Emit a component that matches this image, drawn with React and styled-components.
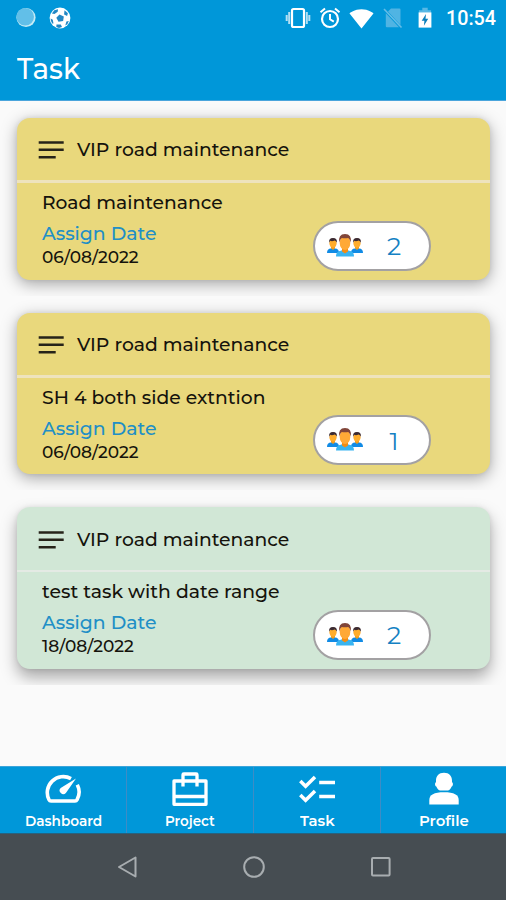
import React, { useLayoutEffect, useRef, useState } from "react";
import styled, { createGlobalStyle } from "styled-components";
import { MdSignalWifi4Bar } from "react-icons/md";

const Global = createGlobalStyle`
  * { box-sizing: border-box; }
  body { margin: 0; background: #fafafa; }
`;

const Screen = styled.div`
  width: 506px;
  height: 900px;
  display: flex;
  flex-direction: column;
  overflow: hidden;
  background: #fafafa;
  font-family: Montserrat, Inter, "Open Sans", sans-serif;
`;

const TopBar = styled.header`
  height: 101px;
  flex: none;
  background: #0097d9;
  border-bottom: 1px solid #4aa5dc;
  color: #fff;
`;

const StatusBar = styled.div`
  height: 36px;
  display: flex;
  align-items: center;
  padding-left: 15px;
  padding-right: 10px;

  svg { display: block; flex: none; }
`;

const StatusGap = styled.span`
  width: ${(p) => p.$w}px;
  flex: ${(p) => (p.$w ? "none" : "1")};
`;

const TitleRow = styled.div`
  height: 64px;
  padding: 2px 0 0 17px;
  display: flex;
  align-items: center;
`;

const TextBox = styled.span`
  display: block;
  flex: none;
  width: ${(p) => p.$w}px;
  height: ${(p) => p.$line}px;
  line-height: ${(p) => p.$line}px;
  font-size: ${(p) => p.$size}px;
  font-weight: ${(p) => p.$weight || 500};
  font-family: ${(p) => p.$family || "inherit"};
  color: ${(p) => p.$color || "inherit"};
  white-space: nowrap;
`;

const TextInner = styled.span`
  display: inline-block;
  transform-origin: 0 50%;
`;

/* Stretches one line of text to a fixed width. */
function FitText({ width, size, line, weight, color, family, children }) {
  const ref = useRef(null);
  const [scale, setScale] = useState(1);
  useLayoutEffect(() => {
    setScale(width / ref.current.offsetWidth);
  }, [width, children]);
  return (
    <TextBox $w={width} $line={line} $size={size} $weight={weight} $color={color} $family={family}>
      <TextInner ref={ref} style={{ transform: `scaleX(${scale})` }}>
        {children}
      </TextInner>
    </TextBox>
  );
}

const List = styled.main`
  flex: 1;
  min-height: 0;
`;

const CardSlot = styled.div`
  height: 194.5px;
  padding: 17.3px 16px 0 17px;
  overflow: hidden;
`;

const Card = styled.article`
  height: 161.5px;
  border-radius: 13px;
  background: ${(p) => p.$fill};
  box-shadow: 0 ${(p) => p.$drop}px 16px rgba(0, 0, 0, 0.34), 0 0 5px rgba(0, 0, 0, 0.08);
  color: #15130c;
`;

const CardHead = styled.div`
  height: 65px;
  display: flex;
  align-items: center;
  gap: 12.5px;
  padding-top: 2px;
  padding-left: 21px;
  border-bottom: ${(p) => p.$rule}px solid ${(p) => p.$ruleColor};
`;

const CardBody = styled.div`
  display: flex;
  padding-left: 25px;
`;

const Details = styled.div`
  width: 270.5px;
  flex: none;
  padding-top: 8px;
  display: flex;
  flex-direction: column;
`;

const CountPill = styled.div`
  width: 118px;
  height: 50px;
  margin-top: 37.5px;
  border: 2.5px solid #a3a1a3;
  border-radius: 25px;
  background: #fff;
  display: flex;
  align-items: center;
  padding-left: 11px;
  gap: 21.5px;
`;

const Count = styled.span`
  width: 18px;
  line-height: 28px;
  padding-top: 1px;
  text-align: center;
  font-size: 25px;
  font-weight: 400;
  color: #1581c3;
`;

const NavBar = styled.nav`
  height: 68px;
  flex: none;
  display: grid;
  grid-template-columns: 127px 127px 127px 1fr;
  background: #0097d9;
  border-top: 1px solid #3ba4da;
  border-bottom: 1px solid #27627f;
`;

const NavItem = styled.div`
  display: flex;
  flex-direction: column;
  align-items: center;
  border-right: ${(p) => (p.$last ? "0" : "1px solid #3d8cc5")};
  color: #fff;
`;

const NavIcon = styled.div`
  height: 44px;
  display: flex;
  align-items: center;
  svg { display: block; }
`;

const SystemBar = styled.footer`
  height: 66px;
  flex: none;
  display: flex;
  justify-content: center;
  align-items: center;
  gap: 104px;
  padding-left: 1px;
  background: #464d52;
  svg { display: block; }
`;

const NotificationDot = () => (
  <svg width="22" height="22" viewBox="0 0 22 22">
    <circle cx="11" cy="10.5" r="9.6" fill="#c4ebf5" />
    <circle cx="10.200" cy="9.700" r="8.800" fill="#62bfe8" />
  </svg>
);

const BallIcon = () => (
  <svg width="24" height="24" viewBox="0 0 24 24">
    <circle cx="12" cy="12" r="10.400" fill="#fff" />
    <g fill="#2187c4">
      <path d="m11.500 8.500 4.300 2-.7 4.500-4.600.8-2.200-4z" />
      <path d="M6.300 4.200 10 3.300l-.3 2.400-3.200 2.200-2.600-.3z" />
      <path d="m16.500 4.300 3.400 3-.8 2.700-3-1.400z" />
      <path d="m2.600 12.500 2.200 1.300.7 3.600-1.300.2q-1.500-2.300-1.600-5.100z" />
      <path d="m8.500 18.400 4.300.1 1.200 2.400-3 1.100-2.700-1z" />
      <path d="m18.400 15.500 2.500-.5-1.600 3.300-2 1.200z" />
    </g>
  </svg>
);

const VibrateIcon = () => (
  <svg width="26" height="24" viewBox="0 0 26 24">
    <rect x="7" y="3" width="12" height="18" rx="1.500" fill="none" stroke="#fff" strokeWidth="2.200" />
    <path d="M4.200 6v12M21.800 6v12M1.700 9v6M24.300 9v6" stroke="#b5dff3" strokeWidth="2" fill="none" />
  </svg>
);

const AlarmIcon = () => (
  <svg width="22" height="24" viewBox="0 0 22 24">
    <circle cx="11" cy="13" r="8" fill="none" stroke="#fff" strokeWidth="2.200" />
    <path d="M11 8v5.300l3.800 2.300M1.500 6.300 6 2.600M20.500 6.300 16 2.600" fill="none" stroke="#fff" strokeWidth="2" />
  </svg>
);

const NoSimIcon = () => (
  <svg width="20" height="22" viewBox="0 0 20 22">
    <path d="M8 1.500h8.500q1 0 1 1V18L5 4.500zM2.800 6.200 16 20.200H3.800q-1 0-1-1z" fill="#50b4e3" />
    <path d="M1 2 18.500 20.500" stroke="#65bde7" strokeWidth="1.600" />
  </svg>
);

const BatteryIcon = () => (
  <svg width="14" height="22" viewBox="0 0 14 22">
    <path d="M4.300 0.800h5.400v2.400h3.400v2.600H.9V3.200h3.400z" fill="#58b8e5" />
    <path d="M.6 5.400h12.800v15.200H.6z" fill="#fff" />
    <path d="M8 7 3.700 13.800h2.700l-.5 5 4.300-7H7.500z" fill="#0b7fbc" />
  </svg>
);

const LinesIcon = () => (
  <svg width="26" height="20" viewBox="0 0 26 20">
    <path d="M.7 2.400h25M.7 9.800h25M.7 17.200h17" stroke="#262319" strokeWidth="2.500" fill="none" />
  </svg>
);

const PersonSmall = () => (
  <>
    <path d="M1 20q0-4.200 4-4.400l2-1 2 1q4 .2 4 4.400z" fill="#118be5" />
    <path d="M5 12h4v3.200L7 17l-2-1.800z" fill="#f49b16" />
    <ellipse cx="7" cy="10.200" rx="3.600" ry="4.600" fill="#ffad2d" />
    <path d="M3.200 9.800q-.8-4.600 3.800-4.700 4.600.1 3.800 4.700Q10 7.700 8.700 7.500 6 8.600 4.200 7.800z" fill="#3b2a32" />
  </>
);

const PeopleIcon = () => (
  <svg width="38" height="26" viewBox="0 0 38 26">
    <PersonSmall />
    <g transform="translate(24 0)"><PersonSmall /></g>
    <path d="M10 23.500q0-5.400 4.800-5.800l4.200-1.600 4.200 1.600q4.800.4 4.800 5.800z" fill="#38b4f1" />
    <path d="M16 14h6v4.400l-3 2.200-3-2.200z" fill="#f28c12" />
    <ellipse cx="19" cy="9.900" rx="5.300" ry="7.200" fill="#ffa936" />
    <path d="M13.300 9.500q-1.400-8.500 5.700-8.600 7.100.1 5.700 8.600-.7-3.600-2.400-4.600-3.300.9-6.600 0-1.700 1-2.400 4.600z" fill="#814539" />
  </svg>
);

const DashboardIcon = () => (
  <svg width="38" height="32" viewBox="0 0 38 32">
    <path
      d="M27 5.600A16 16 0 0 0 5 26.800Q5.600 28 7 28H31Q32.400 28 33 26.800A16 16 0 0 0 33.300 11.700"
      fill="none" stroke="#fff" strokeWidth="3.600"
    />
    <path d="M32 5.500 21.900 19.900a3.600 3.600 0 1 1-5.200-5z" fill="#fff" stroke="#0097d9" strokeWidth="1" paintOrder="stroke" />
  </svg>
);

const ProjectIcon = () => (
  <svg width="38" height="36" viewBox="0 0 38 36">
    <path
      d="M3 10h32v23.300H3zM3 25.500h32M12 15.500V3.800q0-.8.800-.8h12.400q.8 0 .8.800v11.700"
      fill="none" stroke="#fff" strokeWidth="3.300" strokeLinejoin="round"
    />
  </svg>
);

const TaskIcon = () => (
  <svg width="38" height="30" viewBox="0 0 38 30">
    <path d="m2.300 7 5.300 5.300L17 2.900M2.300 21l5.300 5.300L17 16.900M21.200 8.600H37M21.200 22.600H37" fill="none" stroke="#fff" strokeWidth="3.500" />
  </svg>
);

const ProfileIcon = () => (
  <svg width="32" height="34" viewBox="0 0 32 34">
    <path d="M16 .7c5.300 0 8 3.500 8 8v1.500c1.400.4 1.200 3.900-.3 4.300Q21.900 18.500 19.800 18.500h-7.600q-2.100 0-3.900-4c-1.500-.4-1.700-3.900-.3-4.300V8.700c0-4.500 2.700-8 8-8z" fill="#fff" />
    <path d="M1.300 32.500V28C1.300 22.800 6 20.300 16 20.300s14.700 2.500 14.700 7.700v4.500z" fill="#fff" />
  </svg>
);

const TASKS = [
  { fill: "#e9d87c", rule: 3, ruleColor: "#eee3bd", drop: 4, name: "Road maintenance", nameWidth: 181, date: "06/08/2022", dateWidth: 97, count: "2" },
  { fill: "#e9d87c", rule: 3, ruleColor: "#eee3bd", drop: 4, name: "SH 4 both side extntion", nameWidth: 223, date: "06/08/2022", dateWidth: 97, count: "1" },
  { fill: "#d1e7d6", rule: 2, ruleColor: "#e4eae4", drop: 8, name: "test task with date range", nameWidth: 238, date: "18/08/2022", dateWidth: 92, count: "2" },
];

const NAV = [
  { label: "Dashboard", width: 77, Icon: DashboardIcon },
  { label: "Project", width: 50, Icon: ProjectIcon },
  { label: "Task", width: 35, Icon: TaskIcon },
  { label: "Profile", width: 50, Icon: ProfileIcon },
];

function TaskCard({ task }) {
  return (
    <CardSlot>
      <Card $fill={task.fill} $drop={task.drop}>
        <CardHead $rule={task.rule} $ruleColor={task.ruleColor}>
          <LinesIcon />
          <FitText width={212} size={19} line={24}>VIP road maintenance</FitText>
        </CardHead>
        <CardBody>
          <Details>
            <FitText width={task.nameWidth} size={19} line={24}>{task.name}</FitText>
            <FitText width={115} size={19} line={37} color="#218fc6">Assign Date</FitText>
            <FitText width={task.dateWidth} size={17} line={11}>{task.date}</FitText>
          </Details>
          <CountPill>
            <PeopleIcon />
            <Count>{task.count}</Count>
          </CountPill>
        </CardBody>
      </Card>
    </CardSlot>
  );
}

export default function App() {
  return (
    <Screen>
      <Global />
      <TopBar>
        <StatusBar>
          <NotificationDot />
          <StatusGap $w={11} />
          <BallIcon />
          <StatusGap />
          <VibrateIcon />
          <StatusGap $w={8} />
          <AlarmIcon />
          <StatusGap $w={8} />
          <MdSignalWifi4Bar size={25} />
          <StatusGap $w={9} />
          <NoSimIcon />
          <StatusGap $w={15} />
          <BatteryIcon />
          <StatusGap $w={14} />
          <FitText width={50} size={20.5} line={24} weight={500} family="Roboto, sans-serif">10:54</FitText>
        </StatusBar>
        <TitleRow>
          <FitText width={63} size={29} line={34}>Task</FitText>
        </TitleRow>
      </TopBar>
      <List>
        {TASKS.map((task) => (
          <TaskCard key={task.name} task={task} />
        ))}
      </List>
      <NavBar>
        {NAV.map(({ label, width, Icon }, i) => (
          <NavItem key={label} $last={i === NAV.length - 1}>
            <NavIcon><Icon /></NavIcon>
            <FitText width={width} size={14} line={20} weight={600}>{label}</FitText>
          </NavItem>
        ))}
      </NavBar>
      <SystemBar>
        <svg width="22" height="24" viewBox="0 0 22 24">
          <path d="M19.500 2.500v19L3 12z" fill="none" stroke="#a8adb0" strokeWidth="2" strokeLinejoin="round" />
        </svg>
        <svg width="24" height="24" viewBox="0 0 24 24">
          <circle cx="12" cy="12" r="9.800" fill="none" stroke="#a8adb0" strokeWidth="2" />
        </svg>
        <svg width="22" height="22" viewBox="0 0 22 22">
          <rect x="2" y="2" width="17.600" height="17.600" rx="1" fill="none" stroke="#a8adb0" strokeWidth="2" />
        </svg>
      </SystemBar>
    </Screen>
  );
}
